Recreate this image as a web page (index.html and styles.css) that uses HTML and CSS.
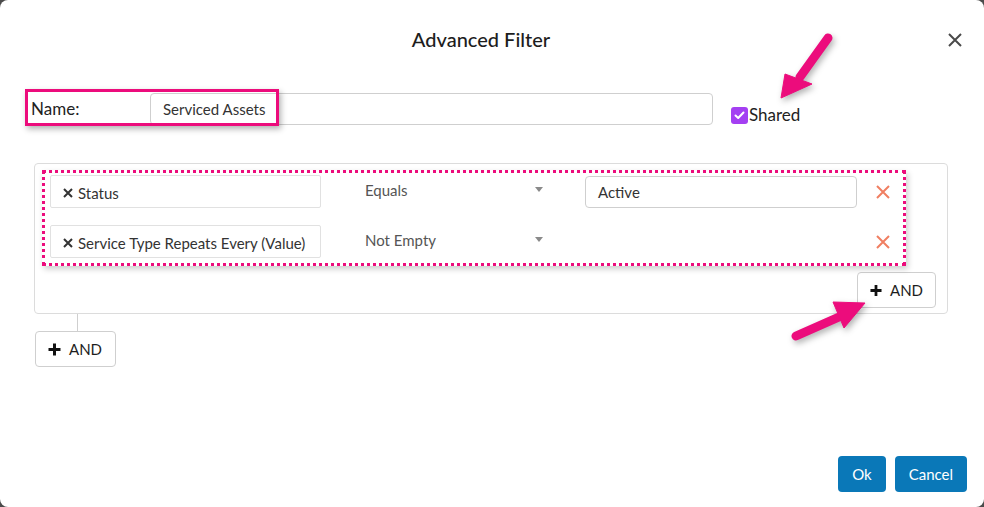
FILE: index.html
```html
<!DOCTYPE html>
<html lang="en">
<head>
    <meta charset="UTF-8">
    <title>Advanced Filter</title>
    <link rel="stylesheet" href="styles.css">
</head>
<body>
    <div class="modal">
        <div class="modal-header">
            <span></span>
            <h1>Advanced Filter</h1>
            <button class="close-btn" aria-label="Close">
                <svg width="14" height="14" viewBox="0 0 14 14"><path d="M1 1L13 13M13 1L1 13" stroke="#4a4a4a" stroke-width="2" fill="none"/></svg>
            </button>
        </div>

        <div class="name-row">
            <label class="name-label">Name:</label>
            <div class="text-input name-input">Serviced Assets</div>
            <div class="shared">
                <span class="checkbox">
                    <svg width="11" height="9" viewBox="0 0 11 9"><path d="M1.5 4.5L4.2 7L9.5 1.5" stroke="#fff" stroke-width="2" fill="none" stroke-linecap="round" stroke-linejoin="round"/></svg>
                </span>
                <span>Shared</span>
            </div>
        </div>

        <div class="filter-group">
            <div class="filter-row">
                <div class="field-box">
                    <svg class="field-x" width="10" height="10" viewBox="0 0 10 10"><path d="M1 1L9 9M9 1L1 9" stroke="#333" stroke-width="2" fill="none"/></svg>
                    Status
                </div>
                <div class="operator">
                    <span>Equals</span>
                    <span class="caret"></span>
                </div>
                <div class="text-input value-input">Active</div>
                <svg class="remove" width="14" height="14" viewBox="0 0 14 14"><path d="M1 1L13 13M13 1L1 13" stroke="#f07f62" stroke-width="2" fill="none"/></svg>
            </div>
            <div class="filter-row">
                <div class="field-box">
                    <svg class="field-x" width="10" height="10" viewBox="0 0 10 10"><path d="M1 1L9 9M9 1L1 9" stroke="#333" stroke-width="2" fill="none"/></svg>
                    Service Type Repeats Every (Value)
                </div>
                <div class="operator">
                    <span>Not Empty</span>
                    <span class="caret"></span>
                </div>
                <div class="value-empty"></div>
                <svg class="remove" width="14" height="14" viewBox="0 0 14 14"><path d="M1 1L13 13M13 1L1 13" stroke="#f07f62" stroke-width="2" fill="none"/></svg>
            </div>
            <div class="group-actions">
                <button class="and-btn">
                    <svg width="13" height="13" viewBox="0 0 13 13"><path d="M6.5 0.5V12.5M0.5 6.5H12.5" stroke="#111" stroke-width="3" fill="none"/></svg>
                    AND
                </button>
            </div>
        </div>

        <div class="connector"></div>
        <button class="and-btn outer-and">
            <svg width="13" height="13" viewBox="0 0 13 13"><path d="M6.5 0.5V12.5M0.5 6.5H12.5" stroke="#111" stroke-width="3" fill="none"/></svg>
            AND
        </button>

        <div class="modal-footer">
            <button class="btn-primary">Ok</button>
            <button class="btn-primary">Cancel</button>
        </div>

        <!-- annotation overlays -->
        <div class="mark mark-name"></div>
        <div class="mark mark-rows"></div>
        <svg class="arrows" width="984" height="507" viewBox="0 0 984 507">
            <g fill="#ec0c7c" stroke="#ec0c7c">
                <line x1="828" y1="38" x2="800" y2="77" stroke-width="9" stroke-linecap="round"/>
                <polygon points="781,98 785,74 812,84" stroke-width="1" stroke-linejoin="round"/>
                <line x1="796" y1="336" x2="839" y2="317" stroke-width="9" stroke-linecap="round"/>
                <polygon points="865,303 833,302 844,328" stroke-width="1" stroke-linejoin="round"/>
            </g>
        </svg>
    </div>
</body>
</html>
```

FILE: styles.css
```css
/* Page */
body {
    margin: 0;
    background: #4b4b4b;
    font-family: 'Lato', 'Open Sans', sans-serif;
    color: #222;
}

button {
    font-family: inherit;
    cursor: pointer;
}

/* Modal */
.modal {
    position: relative;
    width: 984px;
    height: 507px;
    background: #fff;
    border-radius: 8px;
    display: flex;
    flex-direction: column;
    overflow: hidden;
}

.modal-header {
    height: 80px;
    display: grid;
    grid-template-columns: 1fr auto 1fr;
    align-items: center;
    padding-right: 22px;
}

.modal-header h1 {
    margin: 0;
    font-size: 20px;
    font-weight: 500;
    color: #1d1d1d;
    padding-bottom: 2px;
}

.close-btn {
    justify-self: end;
    background: none;
    border: none;
    padding: 0;
    display: flex;
}

/* Name row */
.name-row {
    display: flex;
    align-items: flex-start;
    padding-left: 31px;
    margin-top: 13px;
}

.name-label {
    width: 119px;
    line-height: 32px;
    font-size: 17px;
    color: #222;
}

.text-input {
    box-sizing: border-box;
    height: 32px;
    border: 1px solid #cfcfcf;
    border-radius: 4px;
    padding-left: 12px;
    font-size: 15px;
    line-height: 30px;
    color: #333;
}

.name-input {
    width: 563px;
}

.shared {
    display: flex;
    align-items: center;
    gap: 1px;
    margin-left: 18px;
    margin-top: 12px;
    font-size: 17px;
    line-height: 20px;
    color: #222;
}

.checkbox {
    width: 17px;
    height: 17px;
    border-radius: 3px;
    background: #a43ff2;
    display: flex;
    align-items: center;
    justify-content: center;
}

/* Filter group */
.filter-group {
    box-sizing: border-box;
    width: 914px;
    height: 151px;
    margin: 38px 0 0 34px;
    border: 1px solid #dcdcdc;
    border-radius: 4px;
    padding: 11px 11px 5px 15px;
    display: flex;
    flex-direction: column;
    gap: 17px;
}

.filter-row {
    display: flex;
    align-items: center;
    height: 33px;
}

.field-box {
    box-sizing: border-box;
    width: 271px;
    height: 33px;
    border: 1px solid #e1e1e1;
    border-radius: 2px;
    padding: 3px 0 0 12px;
    display: flex;
    align-items: center;
    gap: 5px;
    font-size: 15px;
    color: #333;
    white-space: nowrap;
}

.operator {
    box-sizing: border-box;
    width: 196px;
    margin-left: 34px;
    padding: 0 8px 4px 10px;
    display: flex;
    align-items: center;
    justify-content: space-between;
    font-size: 15px;
    color: #555;
}

.caret {
    width: 0;
    height: 0;
    border-left: 4px solid transparent;
    border-right: 4px solid transparent;
    border-top: 5px solid #8a8a8a;
}

.value-input {
    width: 272px;
    margin-left: 34px;
}

.value-empty {
    width: 272px;
    margin-left: 34px;
}

.remove {
    margin-left: 19px;
}

.group-actions {
    display: flex;
    justify-content: flex-end;
    margin-top: -3px;
}

.and-btn {
    box-sizing: border-box;
    height: 36px;
    padding: 0 12px;
    background: #fff;
    border: 1px solid #cfcfcf;
    border-radius: 4px;
    display: flex;
    align-items: center;
    gap: 8px;
    font-size: 15px;
    color: #1d1d1d;
}

.group-actions .and-btn {
    width: 79px;
}

.connector {
    width: 1px;
    height: 17px;
    background: #cfcfcf;
    margin-left: 77px;
}

.outer-and {
    width: 81px;
    margin-left: 35px;
}

/* Footer */
.modal-footer {
    margin-top: auto;
    display: flex;
    justify-content: flex-end;
    gap: 9px;
    padding: 0 17px 15px 0;
}

.btn-primary {
    height: 36px;
    padding: 0 14px;
    border: none;
    border-radius: 4px;
    background: #0a78b8;
    color: #fff;
    font-size: 15px;
}

/* Annotation overlays */
.mark {
    position: absolute;
    box-sizing: border-box;
    pointer-events: none;
}

.mark-name {
    left: 25px;
    top: 89px;
    width: 254px;
    height: 37px;
    border: 3px solid #ec0c7c;
    box-shadow: 2px 3px 6px rgba(0, 0, 0, 0.3);
}

.mark-rows {
    left: 42px;
    top: 170px;
    width: 864px;
    height: 96px;
    border: 3px dotted #ec0c7c;
    box-shadow: 2px 3px 6px rgba(0, 0, 0, 0.2);
}

.arrows {
    position: absolute;
    left: 0;
    top: 0;
    pointer-events: none;
    filter: drop-shadow(2px 3px 3px rgba(0, 0, 0, 0.3));
}
```
